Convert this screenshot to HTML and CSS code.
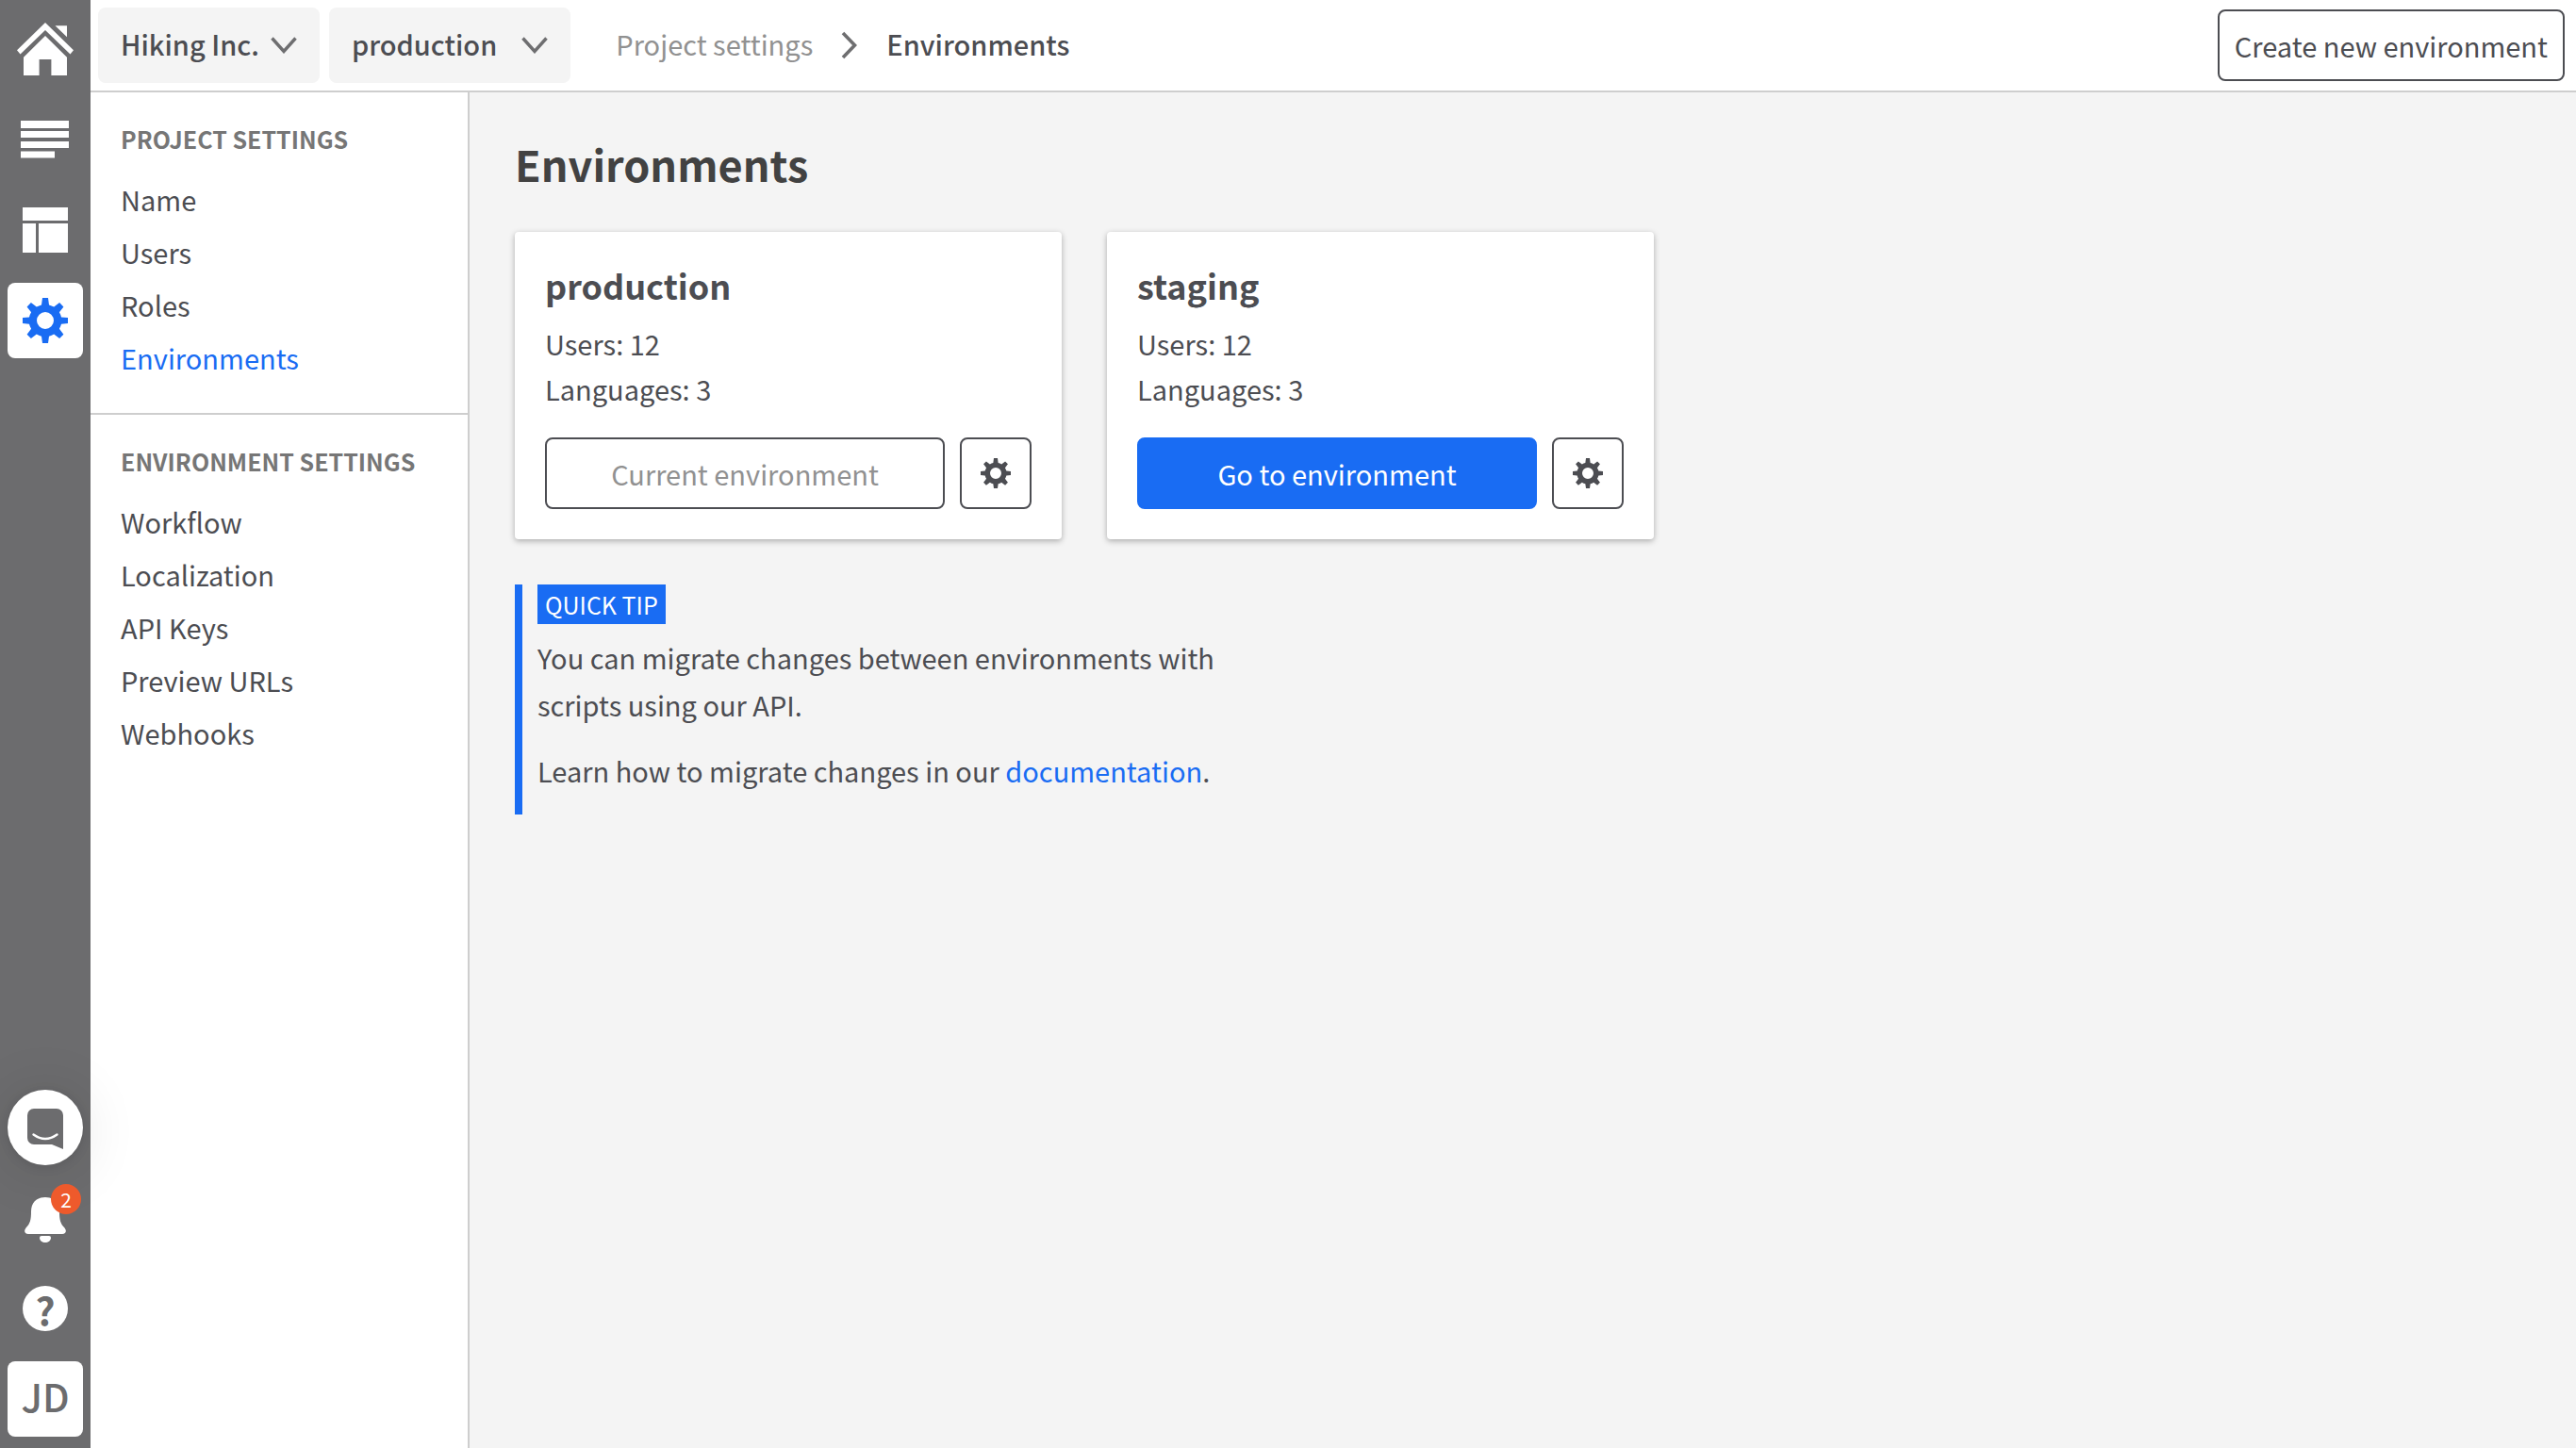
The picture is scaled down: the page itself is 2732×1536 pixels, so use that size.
FILE: index.html
```html
<!DOCTYPE html>
<html lang="en">
<head>
<meta charset="utf-8">
<meta name="viewport" content="width=device-width, initial-scale=1">
<title>Environments</title>
<link rel="stylesheet" href="styles.css">
</head>
<body>
<svg class="sprite" aria-hidden="true">
  <symbol id="gear" viewBox="0 0 48 48">
    <path fill-rule="evenodd" d="M21 0h6l1 7.400a17 17 0 0 1 5.200 2.200l5.900-4.500 4.300 4.300-4.500 5.900a17 17 0 0 1 2.100 5.100L48 21v6l-7 .700a17 17 0 0 1-2.100 5.100l4.500 5.900-4.300 4.300-5.900-4.500a17 17 0 0 1-5.200 2.200L27 48h-6l-1-7.300a17 17 0 0 1-5.200-2.200L8.900 43l-4.300-4.300 4.500-5.900A17 17 0 0 1 7 27.700L0 27v-6l7-.600a17 17 0 0 1 2.100-5.100L4.600 9.400l4.300-4.300 5.900 4.500A17 17 0 0 1 20 7.400zM24 15a9 9 0 1 0 0 18 9 9 0 0 0 0-18z"/>
  </symbol>
  <symbol id="chevron" viewBox="0 0 28 18">
    <path d="M1.500 1.500 14 15.500 26.500 1.500" fill="none" stroke="currentColor" stroke-width="3.400"/>
  </symbol>
</svg>
<div class="app">
  <nav class="rail" aria-label="Main">
    <div class="rail-group">
      <a class="rail-item" href="#" aria-label="Home">
        <svg width="60" height="56" viewBox="0 0 60 56"><path d="M30 0 60 29.300 56.500 33.500 30 8 3.500 33.500 0 29.300zM40.500 3.300H53V15.300zM30 14 53 36.700V56H36.400V39H23.600V56H7V36.700z"/></svg>
      </a>
      <a class="rail-item" href="#" aria-label="Content">
        <svg width="52" height="40" viewBox="0 0 52 40"><path d="M0 0h51v8H0zM0 11h51v7H0zM0 22h51v7H0zM0 32.500h36v7H0z"/></svg>
      </a>
      <a class="rail-item" href="#" aria-label="Models">
        <svg width="48" height="48" viewBox="0 0 48 48"><path d="M0 0h48v14H0zM0 17h14v31H0zM17 17h31v31H17z"/></svg>
      </a>
      <a class="rail-item" href="#" aria-label="Settings" aria-current="page">
        <span class="tile tile-active"><svg width="48" height="48"><use href="#gear"/></svg></span>
      </a>
    </div>
    <div class="rail-group">
      <button class="rail-item" type="button" aria-label="Chat">
        <span class="tile tile-chat"><svg width="38" height="44" viewBox="0 0 38 44"><path d="M7 0h24a7 7 0 0 1 7 7v36l-12-5H7a7 7 0 0 1-7-7V7a7 7 0 0 1 7-7z"/><path d="M6.500 27.500q12.500 9 25 0" fill="none" stroke="#fff" stroke-width="2.400" stroke-linecap="round"/></svg></span>
      </button>
      <button class="rail-item rail-bell" type="button" aria-label="Notifications">
        <svg width="44" height="48" viewBox="0 0 44 48"><path d="M22 0C12 0 7 6.500 7 15c0 9-1 13-5.500 17.500C-1 35.500 0 39 4 39h36c4 0 5-3.500 2.500-6.500C38 28 37 24 37 15 37 6.500 32 0 22 0zM16 43q0-2 2-2h8q2 0 2 2c0 3-3 5-6 5s-6-2-6-5z"/></svg>
        <span class="badge">2</span>
      </button>
      <button class="rail-item" type="button" aria-label="Help"><span class="help">?</span></button>
      <button class="rail-item" type="button" aria-label="Account"><span class="tile tile-user">JD</span></button>
    </div>
  </nav>
  <div class="workspace">
    <header class="topbar">
      <button class="picker" type="button"><span>Hiking Inc.</span><svg width="28" height="18"><use href="#chevron"/></svg></button>
      <button class="picker picker-wide" type="button"><span>production</span><svg width="28" height="18"><use href="#chevron"/></svg></button>
      <nav class="crumbs" aria-label="Breadcrumb">
        <a href="#">Project settings</a>
        <svg width="18" height="30" viewBox="0 0 18 30"><path d="M2 2 14.500 15 2 28" fill="none" stroke="currentColor" stroke-width="3.600"/></svg>
        <strong>Environments</strong>
      </nav>
      <button class="btn" type="button">Create new environment</button>
    </header>
    <div class="columns">
      <aside class="side">
        <section class="side-section">
          <h2>PROJECT SETTINGS</h2>
          <ul>
            <li><a href="#">Name</a></li>
            <li><a href="#">Users</a></li>
            <li><a href="#">Roles</a></li>
            <li><a href="#" class="link" aria-current="page">Environments</a></li>
          </ul>
        </section>
        <section class="side-section">
          <h2>ENVIRONMENT SETTINGS</h2>
          <ul>
            <li><a href="#">Workflow</a></li>
            <li><a href="#">Localization</a></li>
            <li><a href="#">API Keys</a></li>
            <li><a href="#">Preview URLs</a></li>
            <li><a href="#">Webhooks</a></li>
          </ul>
        </section>
      </aside>
      <main class="content">
        <h1>Environments</h1>
        <div class="cards">
          <article class="card">
            <h2>production</h2>
            <p>Users: 12</p>
            <p>Languages: 3</p>
            <div class="actions">
              <button class="btn" type="button" disabled>Current environment</button>
              <button class="btn btn-icon" type="button" aria-label="Production settings"><svg width="32" height="32"><use href="#gear"/></svg></button>
            </div>
          </article>
          <article class="card">
            <h2>staging</h2>
            <p>Users: 12</p>
            <p>Languages: 3</p>
            <div class="actions">
              <button class="btn btn-primary" type="button">Go to environment</button>
              <button class="btn btn-icon" type="button" aria-label="Staging settings"><svg width="32" height="32"><use href="#gear"/></svg></button>
            </div>
          </article>
        </div>
        <section class="tip">
          <span class="tip-label">QUICK TIP</span>
          <p>You can migrate changes between environments with scripts using our API.</p>
          <p>Learn how to migrate changes in our <a class="link" href="#">documentation</a>.</p>
        </section>
      </main>
    </div>
  </div>
</div>
</body>
</html>
```
FILE: styles.css
```css
:root {
  --ink: #4c4d52;
  --grey: #6c6c6e;
  --muted: #919191;
  --line: #cecece;
  --blue: #196cf3;
  --canvas: #f4f4f4;
}
* { box-sizing: border-box; }
body, h1, h2, p, ul { margin: 0; padding: 0; }
body {
  background: var(--canvas);
  color: var(--ink);
  font: 400 29px/50px "Noto Sans CJK SC", "Noto Sans", sans-serif;
}
ul { list-style: none; }
a { color: inherit; text-decoration: none; }
button { font: inherit; color: inherit; cursor: pointer; }
svg { display: block; flex: none; fill: currentColor; }
.sprite { position: absolute; width: 0; height: 0; }
.link { color: var(--blue); }

.app { display: flex; min-height: 100vh; }

.rail {
  position: relative;
  z-index: 1;
  flex: none;
  width: 96px;
  padding: 4px 0;
  display: flex;
  flex-direction: column;
  justify-content: space-between;
  background: var(--grey);
  color: #fff;
}
.rail-item {
  position: relative;
  display: flex;
  align-items: center;
  justify-content: center;
  width: 96px;
  height: 96px;
  padding: 0;
  border: 0;
  background: none;
}
.rail-bell { padding-top: 4px; }
.tile {
  display: flex;
  align-items: center;
  justify-content: center;
  width: 80px;
  height: 80px;
  border-radius: 8px;
  background: #fff;
  color: var(--grey);
}
.tile-active { color: var(--blue); }
.tile-user {
  padding-bottom: 8px;
  font-size: 41px;
  font-weight: 500;
}
.tile-chat {
  padding-top: 4px;
  border-radius: 50%;
  box-shadow: 0 2px 12px rgba(0, 0, 0, .1), 0 4px 64px rgba(0, 0, 0, .12);
}
.badge {
  position: absolute;
  top: 12px;
  right: 10px;
  width: 32px;
  height: 32px;
  border-radius: 50%;
  background: #ee5a2c;
  color: #fff;
  font-size: 21px;
  line-height: 32px;
}
.help {
  width: 48px;
  height: 48px;
  border-radius: 50%;
  background: #fff;
  color: var(--grey);
  font-size: 41px;
  font-weight: 700;
  line-height: 48px;
}

.workspace { flex: 1; min-width: 0; display: flex; flex-direction: column; }
.topbar {
  display: flex;
  align-items: center;
  gap: 10px;
  min-height: 98px;
  padding: 0 12px 0 8px;
  border-bottom: 2px solid var(--line);
  background: #fff;
}
.picker {
  display: flex;
  align-items: center;
  gap: 12px;
  height: 80px;
  padding: 0 24px;
  border: 0;
  border-radius: 8px;
  background: var(--canvas);
  font-weight: 500;
}
.picker-wide { gap: 26px; }
.picker svg, .crumbs svg { color: #6e6e70; }
.picker span, .crumbs a, .crumbs strong { padding-bottom: 4px; }
.crumbs {
  flex: 1;
  display: flex;
  align-items: center;
  gap: 30px;
  padding-left: 38px;
  color: var(--muted);
}
.crumbs strong { color: var(--ink); font-weight: 500; }
.btn {
  height: 76px;
  padding: 0 16px;
  border: 2px solid var(--ink);
  border-radius: 8px;
  background: #fff;
}
.btn:disabled { color: var(--muted); cursor: default; }
.btn-primary { border-color: var(--blue); background: var(--blue); color: #fff; }
.btn-icon {
  display: flex;
  align-items: center;
  justify-content: center;
  width: 76px;
  padding: 0;
}

.columns { flex: 1; display: flex; }
.side {
  flex: none;
  width: 402px;
  border-right: 2px solid var(--line);
  background: #fff;
}
.side-section { padding: 24px 32px 31px; }
.side-section + .side-section { border-top: 2px solid var(--line); }
.side-section h2 {
  margin-bottom: 11px;
  color: #767676;
  font-size: 25px;
  font-weight: 700;
}
.side-section li { line-height: 56px; }

.content { flex: 1; min-width: 0; padding: 48px; }
h1 {
  margin-bottom: 44px;
  color: #424242;
  font-size: 45px;
  font-weight: 700;
  line-height: 56px;
}
.cards { display: flex; flex-wrap: wrap; gap: 48px; }
.card {
  width: 580px;
  padding: 32px;
  border-radius: 4px;
  background: #fff;
  box-shadow: 0 2px 6px rgba(0, 0, 0, .3);
}
.card h2 { margin-bottom: 14px; font-size: 36px; font-weight: 700; line-height: 48px; }
.card p { line-height: 48px; }
.actions { display: flex; gap: 16px; margin-top: 28px; }
.actions .btn:first-child { flex: 1; }

.tip {
  max-width: 760px;
  margin-top: 48px;
  padding: 0 0 22px 16px;
  border-left: 8px solid var(--blue);
}
.tip-label {
  display: block;
  width: fit-content;
  padding: 0 8px;
  background: var(--blue);
  color: #fff;
  font-size: 25px;
  line-height: 42px;
}
.tip p { margin-top: 10px; }
.tip p + p { margin-top: 20px; }
```
